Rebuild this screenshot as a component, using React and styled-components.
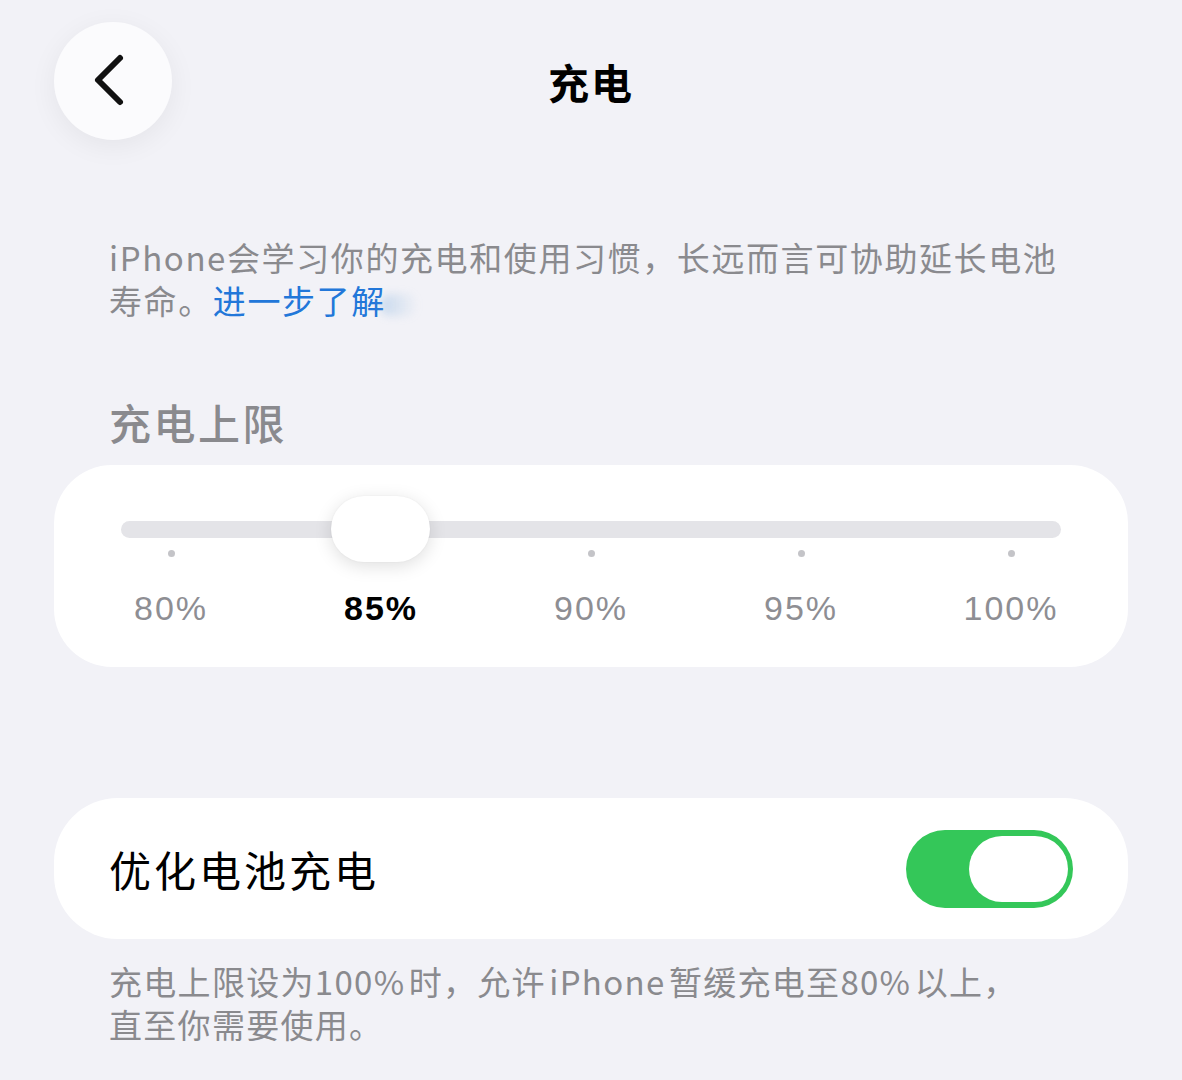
import React from "react";
import styled, { createGlobalStyle } from "styled-components";

const GlobalStyle = createGlobalStyle`
    html, body {
        margin: 0;
        padding: 0;
        background: #f2f2f7;
    }
    body {
        font-family: "Noto Sans CJK SC", "Noto Sans", "Liberation Sans", sans-serif;
        -webkit-font-smoothing: antialiased;
    }
`;

const Page = styled.div`
    width: 1182px;
    min-height: 1080px;
    box-sizing: border-box;
    padding: 22px 54px 0;
    background: #f2f2f7;
`;

const Header = styled.header`
    position: relative;
    height: 118px;
    display: flex;
    align-items: center;
    justify-content: center;
`;

const BackButton = styled.button`
    position: absolute;
    left: 0;
    top: 0;
    width: 118px;
    height: 118px;
    border: none;
    border-radius: 50%;
    background: #fbfbfd;
    box-shadow: 0 6px 28px rgba(0, 0, 0, 0.06);
    display: flex;
    align-items: center;
    justify-content: center;
    padding: 0 6px 0 0;
`;

const Title = styled.h1`
    margin: 0;
    font-size: 41px;
    font-weight: 700;
    color: #000;
    letter-spacing: 2px;
`;

const Note = styled.p`
    margin: ${(p) => p.$top}px 0 0;
    padding: 0 0 0 55px;
    font-size: 33px;
    line-height: 43px;
    letter-spacing: ${(p) => p.$spacing || 1.6}px;
    color: #8a8a8e;
    white-space: nowrap;
`;

const Link = styled.span`
    color: #2277d9;
`;

// the reference screenshot has a soft blue smear right after the link
const Smear = styled.span`
    display: inline-block;
    width: 38px;
    height: 22px;
    margin-left: -6px;
    vertical-align: -2px;
    border-radius: 11px;
    background: linear-gradient(90deg, rgba(120, 170, 220, 0.35), rgba(200, 215, 235, 0));
    filter: blur(4px);
`;

const SectionTitle = styled.h2`
    margin: 76px 0 19px;
    padding-left: 55px;
    font-size: 42px;
    line-height: 48px;
    letter-spacing: 2.5px;
    font-weight: 500;
    color: #8a8a8e;
`;

const Card = styled.section`
    background: #fff;
    border-radius: 58px;
`;

const SliderCard = styled(Card)`
    height: 202px;
    box-sizing: border-box;
    padding-top: 56px;
`;

const Track = styled.div`
    position: relative;
    margin: 0 67px;
    height: 17px;
    border-radius: 9px;
    background: #e4e4e8;
`;

const Thumb = styled.div`
    position: absolute;
    top: -25px;
    width: 99px;
    height: 66px;
    border-radius: 33px;
    background: #fff;
    box-shadow: 0 4px 18px rgba(0, 0, 0, 0.13), 0 0 2px rgba(0, 0, 0, 0.05);
`;

const Stops = styled.div`
    display: grid;
    grid-template-columns: repeat(5, 210px);
    justify-content: center;
    margin-top: 12px;
`;

const Stop = styled.div`
    display: flex;
    flex-direction: column;
    align-items: center;
`;

const Dot = styled.span`
    width: 7px;
    height: 7px;
    border-radius: 50%;
    background: ${(p) => (p.$hidden ? "transparent" : "#c4c4c8")};
`;

const StopLabel = styled.span`
    margin-top: 32px;
    font-family: "Liberation Sans", "Noto Sans", sans-serif;
    font-size: 34px;
    line-height: 38px;
    letter-spacing: 2px;
    font-weight: ${(p) => (p.$active ? 700 : 400)};
    color: ${(p) => (p.$active ? "#000" : "#8e8e93")};
`;

const ToggleCard = styled(Card)`
    margin-top: 131px;
    height: 141px;
    border-radius: 64px;
    display: flex;
    align-items: center;
    justify-content: space-between;
    padding: 0 55px;
`;

const RowLabel = styled.span`
    font-size: 42px;
    color: #000;
    letter-spacing: 3px;
`;

const Switch = styled.div`
    position: relative;
    width: 167px;
    height: 78px;
    border-radius: 39px;
    background: #34c759;
`;

const Knob = styled.span`
    position: absolute;
    top: 6px;
    right: 5px;
    width: 99px;
    height: 66px;
    border-radius: 33px;
    background: #fff;
`;

const stops = [80, 85, 90, 95, 100];
const value = 85;
const gap = "\u200A";

export default function App() {
    const index = stops.indexOf(value);

    return (
        <>
            <GlobalStyle />
            <Page>
                <Header>
                    <BackButton aria-label="返回">
                        <svg width="40" height="56" viewBox="0 0 40 56">
                            <path
                                d="M30 5 L8 27 L30 49"
                                fill="none"
                                stroke="#111"
                                strokeWidth="6"
                                strokeLinecap="round"
                                strokeLinejoin="round"
                            />
                        </svg>
                    </BackButton>
                    <Title>充电</Title>
                </Header>

                <Note $top={96}>
                    iPhone会学习你的充电和使用习惯，长远而言可协助延长电池
                    <br />
                    寿命。<Link>进一步了解</Link>
                    <Smear />
                </Note>

                <SectionTitle>充电上限</SectionTitle>
                <SliderCard>
                    <Track>
                        <Thumb style={{ left: 48 + index * 210 - 48 }} />
                    </Track>
                    <Stops>
                        {stops.map((s, i) => (
                            <Stop key={s}>
                                <Dot $hidden={i === index} />
                                <StopLabel $active={i === index}>{s}%</StopLabel>
                            </Stop>
                        ))}
                    </Stops>
                </SliderCard>

                <ToggleCard>
                    <RowLabel>优化电池充电</RowLabel>
                    <Switch>
                        <Knob />
                    </Switch>
                </ToggleCard>

                <Note $top={21} $spacing={1.3}>
                    充电上限设为100%{gap}时，允许{gap}iPhone{gap}暂缓充电至80%{gap}以上，
                    <br />
                    直至你需要使用。
                </Note>
            </Page>
        </>
    );
}
